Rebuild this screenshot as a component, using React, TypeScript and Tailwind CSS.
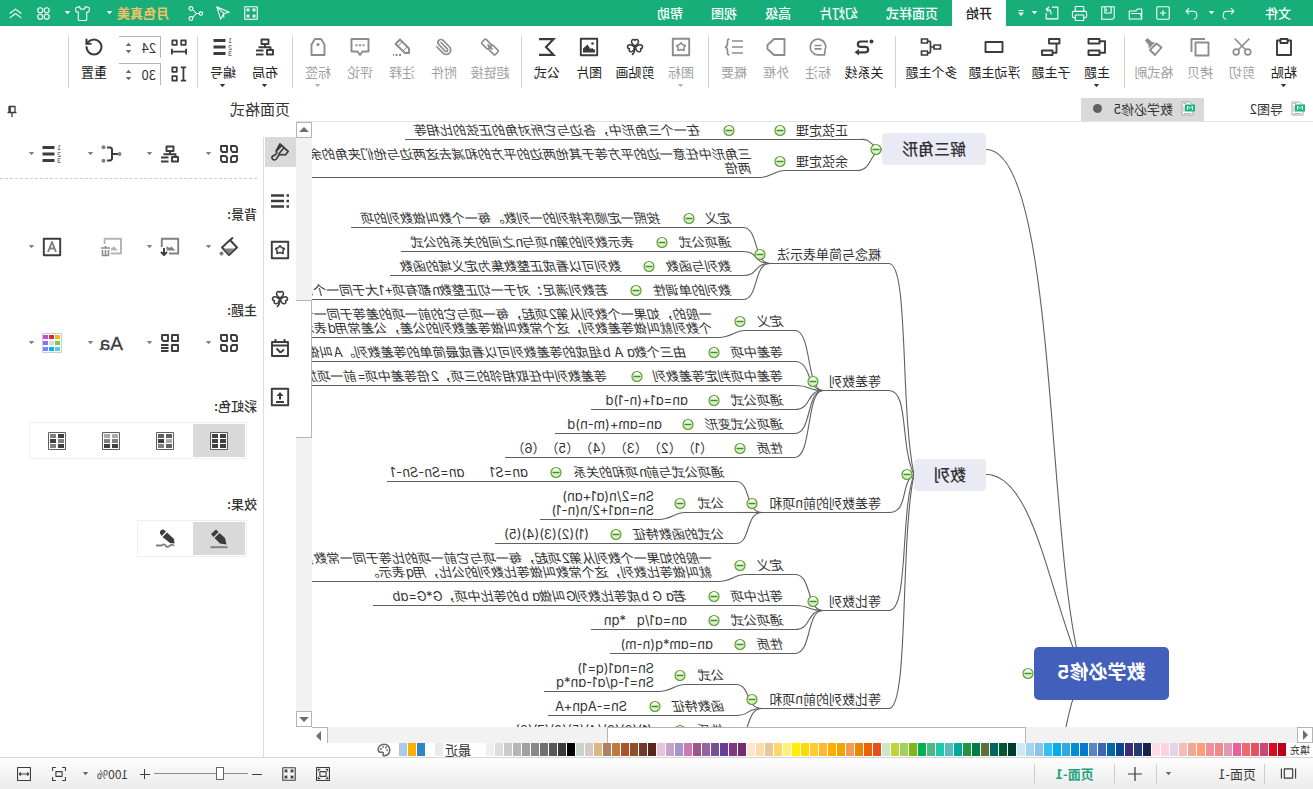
import React, { useState } from 'react';
import { Paperclip, Printer, RotateCw, Shirt, Palette } from 'lucide-react';

interface IcoProps {
  children: React.ReactNode;
  size?: number;
  sw?: number;
  box?: number;
}

const Ico: React.FC<IcoProps> = ({ children, size = 18, sw = 1.9, box = 18 }) => (
  <svg width={size} height={size} viewBox={`0 0 ${box} ${box}`} fill="none" stroke="currentColor" strokeWidth={sw} strokeLinejoin="round" className="shrink-0 overflow-visible">
    {children}
  </svg>
);

const Caret: React.FC<{ className?: string }> = ({ className = '' }) => (
  <svg width="7" height="4" viewBox="0 0 7 4" fill="currentColor" className={`shrink-0 ${className}`}><path d="M0.8 0h5.4L3.5 3.2z" /></svg>
);

const star = 'M9 4.8l1.7 2 2.6.7-1.4 2.3.1 2.7L9 11.6l-3 .9.1-2.7-1.4-2.3 2.6-.7z';

const numberedList = (
  <>
    <path d="M6.5 2.5h12M6.5 9h12M6.5 15.5h12" strokeWidth="3" />
    <g fill="currentColor" stroke="none" fontSize="7" fontFamily="Liberation Sans, sans-serif">
      <text x="0" y="5">1</text>
      <text x="0" y="11.5">2</text>
      <text x="0" y="18">3</text>
    </g>
  </>
);

const orgChart = <path d="M5.5 1.5h7V6h-7zM9 6v3.500M3.500 12V9.300h12M1 12h6v4.500H1zM10.500 12.500H18M10.500 16.500H18" />;

const clover = (
  <g strokeWidth="1.6">
    <path d="M9 8.200C6 6 5.200 4.600 5.600 3.100 6 1.400 8 .900 9 2.400 10 .900 12 1.400 12.400 3.100 12.800 4.600 12 6 9 8.200z" />
    <path d="M8.400 9c-.4 3.400-1.600 4.700-3.200 4.800-1.700.1-2.700-1.500-1.700-2.900C1.700 10.600.900 8.900 2 7.500 3 6.200 5.200 6.300 8.400 9z" />
    <path d="M9.600 9c.4 3.400 1.600 4.700 3.200 4.800 1.700.1 2.700-1.500 1.700-2.900 1.800-.3 2.600-2 1.500-3.400-1-1.300-3.200-1.200-6.400 1.500z" />
    <path d="M9 8.500c-.2 3.500.5 6 3 8.500" />
  </g>
);

const fourLeaf = <path d="M2.500 1H7v4L5.500 7H1V2.500zM11 1h6v4.500L15.500 7H11zM1 11h4.500L7 12.500V17H2.500L1 15.500zM12.500 11H17v4.500L15.500 17H11v-4.500z" />;

const expandArrows = <path d="M1 1h16v16H1zM7 7L4.500 4.500M4 7V4h3M11 7l2.500-2.500M11 4h3v3M7 11l-2.500 2.500M4 11v3h3M11 11l2.500 2.500M14 11v3h-3" />;

const icons: Record<string, React.ReactNode> = {
  paste: <path d="M5.500 2.500h-3.500v14.500h14V2.500h-3.500M5.500 1h7v4h-7z" />,
  cut: <g strokeWidth="1.6"><circle cx="3.2" cy="14" r="2.9" /><circle cx="14.8" cy="14" r="2.9" /><path d="M1.500 0.500l11.500 11.500M16.500 0.500L5 12" /></g>,
  copy: <path d="M0.500 4.500h13v13h-13zM4 1h13.500V14" />,
  brush: <><path d="M6.500 5.500L13 12l-5 5-6.500-7.500z" /><path d="M8 4.500l3-.5L15.500 0 18 2.500 14.500 7l-.5 3.500z" fill="currentColor" stroke="none" /></>,
  topic: <path d="M6.500 1h11v4.500h-11zM6.500 12.500h11V17h-11zM6.500 3.200H1v11.500h5.500" />,
  subTopic: <path d="M0.500 1h10.500v4.500H.5zM7.500 12.500h10.500V17H7.500zM3.500 5.500v9.200h4" />,
  floating: <path d="M0.500 4h17v10H.5z" />,
  multi: <path d="M-0.500 7h6.500v4h-6.500zM12.500 1h6v4h-6zM12.500 13h6v4h-6zM6 9h3M12.500 3C9.500 3 9.500 3 9.500 5.500v7c0 2.500 0 2.500 3 2.500" strokeWidth="1.7" />,
  relation: <><path d="M5 3.500h7.500c3.500 0 3.500 5.300 0 5.300H7.500c-3.500 0-3.500 5.500 0 5.500H14" strokeWidth="2.2" /><circle cx="1.5" cy="3.5" r="2" fill="currentColor" stroke="none" /><path d="M14 11l4.500 3.300L14 17.600z" fill="currentColor" stroke="none" /></>,
  callout: <path d="M2.500 16.800h7A7.800 7.800 0 1 0 2 12.500zM5.500 7.500h7M5.500 10.800h7" strokeWidth="1.7" />,
  boundary: <path d="M0.500 1h10.500l6.500 6v4L11 17H.5z" />,
  summary: <path d="M0 3h11M0 9h11M0 15h11M13.500 1c2 0 2 1 2 3.500S15.500 8.500 17.500 9c-2 .5-2 2-2 4.500s0 3.500-2 3.500" strokeWidth="1.7" />,
  mark: <><path d="M0.800.8h16.400v16.400H.8z" /><path d={star} strokeWidth="1.6" /></>,
  clover,
  image: <><path d="M0.800.8h16.400v16.400H.8z" /><path d="M3 14.500V12l3-2 1.500 1 3-4.500L15 10.500v4z" fill="currentColor" stroke="none" /><circle cx="5.5" cy="5.5" r="1.3" fill="currentColor" stroke="none" /></>,
  sigma: <path d="M17 1.200H2.500L10 9l-7.500 7.800H17" strokeWidth="2.2" strokeLinejoin="miter" />,
  link: <g strokeWidth="1.6"><rect x="8" y="3" width="9" height="6" rx="1" transform="rotate(-45 12.5 6)" /><rect x="1" y="9" width="9" height="6" rx="1" transform="rotate(-45 5.5 12)" /><path d="M6.500 11.500l5-5" strokeWidth="2" /></g>,
  clip: <Paperclip size={18} strokeWidth={2.2} />,
  note: <><path d="M2 10.500L11 1.500 15.500 6 6 15H2z" /><path d="M9 4l4.500 4.500M4 9l4 4" strokeWidth="1" /><path d="M10 17h8" strokeDasharray="2 1.5" /></>,
  comment: <><path d="M0.500 1h17v12.500h-6L9 17l-2.500-3.500h-6z" /><path d="M4.500 7.200h2M8 7.200h2M11.500 7.200h2" /></>,
  tag: <><path d="M2.500 17V6.500L6 1h6l3.500 5.500V17z" /><circle cx="9" cy="6.5" r="1.6" fill="currentColor" stroke="none" /></>,
  layout: orgChart,
  number: numberedList,
  reset: <RotateCw size={20} strokeWidth={2.5} x={-1} y={-1} />
};

interface RibbonItem {
  icon: string;
  label: string;
  off?: boolean;
  menu?: boolean;
}

const ribbonGroups: RibbonItem[][] = [
  [
    { icon: 'paste', label: '粘贴', menu: true },
    { icon: 'cut', label: '剪切', off: true },
    { icon: 'copy', label: '拷贝', off: true },
    { icon: 'brush', label: '格式刷', off: true }
  ],
  [
    { icon: 'topic', label: '主题', menu: true },
    { icon: 'subTopic', label: '子主题' },
    { icon: 'floating', label: '浮动主题' },
    { icon: 'multi', label: '多个主题' }
  ],
  [
    { icon: 'relation', label: '关系线' },
    { icon: 'callout', label: '标注', off: true },
    { icon: 'boundary', label: '外框', off: true },
    { icon: 'summary', label: '概要', off: true }
  ],
  [
    { icon: 'mark', label: '图标', off: true, menu: true },
    { icon: 'clover', label: '剪贴画' },
    { icon: 'image', label: '图片' },
    { icon: 'sigma', label: '公式' }
  ],
  [
    { icon: 'link', label: '超链接', off: true },
    { icon: 'clip', label: '附件', off: true },
    { icon: 'note', label: '注释', off: true },
    { icon: 'comment', label: '评论', off: true },
    { icon: 'tag', label: '标签', off: true, menu: true }
  ],
  [
    { icon: 'layout', label: '布局', menu: true },
    { icon: 'number', label: '编号', menu: true }
  ]
];

const itemWidths: Record<number, string> = { 2: 'w-[42px]', 3: 'w-[50px]', 4: 'w-[63px]' };

const RibbonButton: React.FC<{ item: RibbonItem }> = ({ item }) => (
  <button className={`flex flex-col items-center pt-3 ${itemWidths[item.label.length]} ${item.off ? 'text-[#8c8c8c]' : 'text-[#3c3c3c]'}`}>
    <Ico>{icons[item.icon]}</Ico>
    <span className={`mt-[7px] text-[13px] leading-[18px] whitespace-nowrap ${item.off ? 'text-[#a0a0a0]' : 'text-[#222222]'}`}>{item.label}</span>
    {item.menu && <Caret className={`mt-[3px] ${item.off ? 'text-[#b5b5b5]' : 'text-[#33334d]'}`} />}
  </button>
);

const Divider = () => <div className="mt-2.5 mr-1.5 ml-1 h-[52px] w-px shrink-0 bg-[#d2d2d2]" />;

const Spinner: React.FC<{ label: string; value: string; icon: React.ReactNode }> = ({ label, value, icon }) => {
  const [val, setVal] = useState(value);
  return (
    <div className="flex items-center gap-2.5 text-[#3c3c3c]">
      <Ico size={16} sw={2}>{icon}</Ico>
      <div className="flex h-[22px] w-[42px] items-center border-t border-l border-[#b4b4b4]">
        <input aria-label={label} value={val} onChange={e => setVal(e.target.value)} className="w-7 bg-transparent pl-1 text-[13px] leading-4 text-[#33333d] outline-none" />
        <div className="flex flex-col gap-1 text-[#666666]">
          <button aria-label={`${label} +`} onClick={() => setVal(String(Number(val) + 1))}><Caret className="rotate-180" /></button>
          <button aria-label={`${label} -`} onClick={() => setVal(String(Number(val) - 1))}><Caret /></button>
        </div>
      </div>
    </div>
  );
};

interface TopicRow {
  y: number;
  text: string;
  cx: number; // collapse button
  x: number; // leaf text
  leaf: string[];
  end: number;
  plain?: boolean;
}

interface Branch {
  y: number;
  text: string;
  joint: number;
  start: number;
  rows: TopicRow[];
}

const branches: Branch[] = [
  {
    y: 132, text: '概念与简单表示法', joint: 546, start: 570,
    rows: [
      { y: 96, text: '定义', cx: 624, x: 652, leaf: ['按照一定顺序排列的一列数。每一个数叫做数列的项'], end: 962 },
      { y: 120, text: '通项公式', cx: 651, x: 678, leaf: ['表示数列的第n项与n之间的关系的公式'], end: 912 },
      { y: 144, text: '数列与函数', cx: 664, x: 691, leaf: ['数列可以看成正整数集为定义域的函数'], end: 923 },
      { y: 168, text: '数列的单调性', cx: 677, x: 704, leaf: ['若数列满足：对于一切正整数n都有项+1大于同一个常'], end: 1100 }
    ]
  },
  {
    y: 259, text: '等差数列', joint: 493, start: 518,
    rows: [
      { y: 199, text: '定义', cx: 573, x: 600, leaf: ['一般的，如果一个数列从第2项起，每一项与它的前一项的差等于同一个', '个数列就叫做等差数列，这个常数叫做等差数列的公差，公差常用d表示'], end: 1100 },
      { y: 230, text: '等差中项', cx: 599, x: 626, leaf: ['由三个数a A b组成的等差数列可以看成最简单的等差数列。A叫做'], end: 1100 },
      { y: 254, text: '等差中项判定等差数列', cx: 676, x: 705, leaf: ['等差数列中任取相邻的三项，2倍等差中项=前一项加'], end: 1100 },
      { y: 278, text: '通项公式', cx: 599, x: 625, leaf: ['an=a1+(n-1)d'], end: 722, plain: true },
      { y: 302, text: '通项公式变形', cx: 625, x: 651, leaf: ['an=am+(m-n)d'], end: 758, plain: true },
      { y: 326, text: '性质', cx: 573, x: 600, leaf: ['（1）（2）（3）（4）（5）（6）'], end: 808, plain: true }
    ]
  },
  {
    y: 381, text: '等差数列的前n项和', joint: 554, start: 577,
    rows: [
      { y: 350, text: '通项公式与前n项和的关系', cx: 757, x: 785, leaf: ['an=S1       an=Sn-Sn-1'], end: 926 },
      { y: 381, text: '公式', cx: 633, x: 659, leaf: ['Sn=2/n(a1+an)', 'Sn=na1+2\\n(n-1)'], end: 773, plain: true },
      { y: 412, text: '公式的函数特征', cx: 697, x: 724, leaf: ['(1)(2)(3)(4)(5)'], end: 818, plain: true }
    ]
  },
  {
    y: 479, text: '等比数列', joint: 493, start: 518,
    rows: [
      { y: 443, text: '定义', cx: 573, x: 600, leaf: ['一般的如果一个数列从第2项起，每一项与它前一项的比等于同一常数，', '就叫做等比数列，这个常数叫做等比数列的公比，用q表示。'], end: 1100 },
      { y: 474, text: '等比中项', cx: 599, x: 626, leaf: ['若a G b成等比数列G叫做a b的等比中项，G*G=ab'], end: 940 },
      { y: 498, text: '通项公式', cx: 599, x: 626, leaf: ['an=a1/q   *qn'], end: 722, plain: true },
      { y: 522, text: '性质', cx: 573, x: 600, leaf: ['an=am*q(n-m)'], end: 703, plain: true }
    ]
  },
  {
    y: 577, text: '等比数列的前n项和', joint: 554, start: 577,
    rows: [
      { y: 553, text: '公式', cx: 633, x: 659, leaf: ['Sn=na1(q=1)', 'Sn=1-q/a1-an*q'], end: 769, plain: true },
      { y: 584, text: '函数特征', cx: 658, x: 686, leaf: ['Sn=-Aqn+A'], end: 765, plain: true },
      { y: 608, text: '性质', cx: 633, x: 661, leaf: ['(1)(2)(3)(4)(5)(6)(7)(8)'], end: 810, plain: true }
    ]
  }
];

// topics above the first main branch hang on their own node
const sineRows: TopicRow[] = [
  { y: 8, text: '正弦定理', cx: 533, x: 612, leaf: ['在一个三角形中，各边与它所对角的正弦的比相等'], end: 908 },
  { y: 39, text: '余弦定理', cx: 533, x: 561, leaf: ['三角形中任意一边的平方等于其他两边的平方的和减去这两边与他们夹角的余', '两倍'], end: 1100 }
];

const rowLine = (row: TopicRow, from: number) => {
  const y = row.y + 9.5;
  if (row.leaf.length === 1) return `M${from} ${y}H${row.end}`;
  return `M${from} ${y}H${row.cx - 5}c10 0 14 7 26 7H${row.end}`;
};

const Label: React.FC<{ x: number; y: number; children: React.ReactNode; slant?: boolean }> = ({ x, y, children, slant }) => (
  <div className={`absolute text-[13px] leading-[14px] whitespace-pre text-[#333333] ${slant ? 'italic' : ''}`} style={{ left: x, top: y }}>
    {children}
  </div>
);

const Row: React.FC<{ row: TopicRow; x: number; slant?: boolean }> = ({ row, x, slant }) => (
  <>
    <Label x={x} y={row.y - 7} slant={slant}>{row.text}</Label>
    <Label x={row.x} y={row.y - 7 * row.leaf.length} slant={!row.plain}>{row.leaf.join('\n')}</Label>
  </>
);

const Toggle: React.FC<{ x: number; y: number }> = ({ x, y }) => (
  <g>
    <circle cx={x} cy={y + 0.5} r="5" fill="url(#knob)" stroke="#5aa02c" strokeWidth="1.2" />
    <path d={`M${x - 3.5} ${y + 0.5}h7`} stroke="#3c9a0a" strokeWidth="1.5" />
  </g>
);

const MindMap = () => (
  <div className="relative min-w-0 flex-1 overflow-hidden bg-white font-[Inter,'Noto_Sans_CJK_SC',sans-serif] [font-feature-settings:'cv11'] [text-spacing-trim:space-all]">
    <svg className="absolute inset-0 h-full w-full" fill="none" stroke="#606060" strokeWidth="1.1">
      <defs>
        <linearGradient id="knob" x1="0" y1="0" x2="0" y2="1">
          <stop offset="0" stopColor="#ffffff" />
          <stop offset="1" stopColor="#cfe6c4" />
        </linearGradient>
      </defs>
      <path d="M327 27.5C255 27.5 267 438 230 551M327 352.5C278 352.5 263 478 230 551M230 551C240 572 244 590 248 610" />
      <path d="M431 27.5C444 24 441 16.5 453 17.500M431 27.500C444 31 441 48 455 48.500" />
      {sineRows.map(row => <path key={row.y} d={rowLine(row, 453)} />)}
      {branches.map(b => (
        <g key={b.y}>
          <path d={`M399 352.5C413 ${352 + (b.y - 352) * 0.3} 404 ${b.y + 9.5} 424 ${b.y + 9.5}H${b.joint}`} />
          {b.rows.map(row => (
            <g key={row.y}>
              <path d={`M${b.joint - 3} ${b.y + 9.5}C${b.joint + 14} ${b.y + 9.5} ${b.joint + 8} ${row.y + 9.5} ${b.start} ${row.y + 9.5}`} />
              <path d={rowLine(row, b.start)} />
            </g>
          ))}
        </g>
      ))}
      <Toggle x={437} y={27} />
      <Toggle x={533} y={8} />
      <Toggle x={584} y={8} />
      <Toggle x={533} y={39} />
      <Toggle x={406} y={352} />
      <Toggle x={285} y={551} />
      {branches.map(b => (
        <g key={b.y}>
          <Toggle x={b.joint + 7} y={b.y} />
          {b.rows.map(row => <Toggle key={row.y} x={row.cx} y={row.y} />)}
        </g>
      ))}
    </svg>
    {sineRows.map(row => <Row key={row.y} row={row} x={465} />)}
    {branches.map(b => (
      <React.Fragment key={b.y}>
        <Label x={432} y={b.y - 7}>{b.text}</Label>
        {b.rows.map(row => <Row key={row.y} row={row} x={b.start + 11} slant />)}
      </React.Fragment>
    ))}
    <div className="absolute top-[11px] left-[327px] flex h-8 w-[104px] items-center justify-center rounded-[4px] bg-[#eaeaf4] text-base font-medium text-[#333333]">解三角形</div>
    <div className="absolute top-[337px] left-[327px] flex h-8 w-[72px] items-center justify-center rounded-[4px] bg-[#eaeaf4] text-base font-medium text-[#333333]">数列</div>
    <div className="absolute top-[525px] left-[144px] flex h-[53px] w-[135px] items-center justify-center rounded-[5px] bg-[#425fbb] text-[19px] font-bold text-white">数学必修5</div>
  </div>
);

const fills = (
  '#b8001b #d90a22 #c74a74 #e8505f #ec6a6f #ea5f9b #e099b5 #ec8a87 #f08f9b #ff9d77 #f0a896 #f6bcb9 #e7d3e8 #ffd2e3 #fddde2 ' +
  '#14234d #233a70 #412a75 #0a468f #0068a2 #4065b0 #5586c5 #007bce #008fd0 #30a9df #00aeef #2fc2f3 #8cc4ea #9fd6ee #cce9f4 ' +
  '#003c2e #005a2e #00665f #5a7235 #007b45 #22963f #00a99d #57bcbc #1cc9ad #4dba82 #00b050 #7eb814 #a3cf62 #bfd63a #cbe6c8 ' +
  '#e4501e #ec6400 #ee8400 #f39a57 #f2a500 #ffad00 #ffb92e #ffcb2f #ffdb00 #fff000 #fff17f #ffd66d #e8c896 #fddcab #fde6cf ' +
  '#742d70 #803a84 #683f98 #75519a #94649d #a05588 #cc7aae #a792cf #c7a3cc #eac0db ' +
  '#57271a #733a2e #905128 #a9542b #bf7a40 #ad8264 #ddb784 #d4cac7 #c8d3ca ' +
  '#000000 #3e3a39 #595757 #727171 #888888 #9fa0a0 #b5b5b6 #c9caca #dcdddd #efefef'
).split(' ');

const Swatch: React.FC<{ color: string }> = ({ color }) => (
  <button aria-label={color} className="h-[13px] w-2 shrink-0" style={{ backgroundColor: color }} />
);

const Arrow: React.FC<{ d: string; label: string; className: string }> = ({ d, label, className }) => (
  <button aria-label={label} className={`flex size-4 shrink-0 items-center justify-center border-[#b4b4b4] bg-white text-[#6e6e6e] ${className}`}>
    <svg width="10" height="10" viewBox="0 0 10 10" fill="currentColor"><path d={d} /></svg>
  </button>
);

const DocIcon = () => (
  <svg width="14" height="15" viewBox="0 0 14 15" fill="none" className="shrink-0">
    <path d="M5.500 1H13v13H2V4z" fill="#ffffff" stroke="#a8a8a8" />
    <path d="M4 12.500h7M8.500 2.500h3M11 5v6" stroke="#b5b5b5" />
    <path d="M0 3.500h10v7H0z" fill="#12b981" />
    <path d="M2.500 9V5l2.500 2.500L7.500 5v4" stroke="#ffffff" />
  </svg>
);

const stripIcons: { label: string; icon: React.ReactNode }[] = [
  { label: '格式', icon: <path d="M9 1L0.800 8.500l3 3.500 3-.5 3 .5c2 1.500 2.500 5 4.500 5s3.500-2 2.500-3.500-4.500-1-4.500-3.500l.5-2zM5 4.800l5.500 6.500M9 1v3.500l3.500 3.500" strokeWidth="1.7" /> },
  { label: '大纲', icon: <path d="M5 3.500h13M5 9h13M5 14.500h13M0 3.500h2.500M0 9h2.500M0 14.500h2.500" strokeWidth="2.6" /> },
  { label: '图标', icon: icons.mark },
  { label: '剪贴画', icon: clover },
  { label: '任务', icon: <path d="M1 3h16v14H1zM1 6.500h16M4.500 0V3M13.500 0V3M12.500 9.500l-4 4M5 10.500l3.500 3" /> },
  { label: '上传', icon: <><path d="M0.800.8h16.400v16.400H.8z" /><path d="M9 11.500V6M5 14h8" strokeWidth="2" /><path d="M5.500 8L9 4l3.500 4z" fill="currentColor" stroke="none" /></> }
];

const toolRows: Record<string, { label: string; icon: React.ReactNode; off?: boolean }[]> = {
  布局: [
    { label: '模板', icon: fourLeaf },
    { label: '布局', icon: orgChart },
    { label: '连线', icon: <><path d="M1.500 9H8M13 2.500H9.500L8 4v10l1.500 1.500H13" strokeWidth="2" /><g fill="#808080" stroke="none"><circle cx="0.5" cy="9" r="2" /><circle cx="16.5" cy="2.2" r="2" /><circle cx="16.5" cy="15.8" r="2" /></g></> },
    { label: '编号', icon: numberedList }
  ],
  背景: [
    { label: '背景颜色', icon: <><path d="M5-0.500L9 3M1 9.500L8 2l8 7.500L9 17z" /><path d="M3.500 10.500h11L9 16z" fill="#808080" stroke="none" /><circle cx="16.5" cy="15.5" r="2" fill="#808080" stroke="none" /></> },
    { label: '背景图片', icon: <><path d="M10 15.500H.8V.8h16.400V9" stroke="#808080" /><path d="M3.500 12.500l4-4 2 1.500 3-2v4.500z" fill="#808080" stroke="none" /><path d="M15 10v7M12 14l3 3 3-3" /></> },
    { label: '删除背景', off: true, icon: <><path d="M9 15.500H-1V.8h16.400V6" /><path d="M2 12.500l4-4 3 2v2z" fill="currentColor" stroke="none" /><path d="M10 10h9M11.500 12v5.500h6V12M14.500 8v2M14.500 12v5" stroke="#8c8c8c" strokeWidth="1.6" /></> },
    { label: '水印', icon: <><path d="M0.800.8h16.400v16.400H.8z" /><path d="M5 14l4-10 4 10M6.500 10.500h5" stroke="#808080" /></> }
  ],
  主题: [
    { label: '主题', icon: fourLeaf },
    { label: '主题颜色', icon: <path d="M1 1h6v6H1zM11 1h6v4.500L15.500 7H11zM1 11h6v6H1zM10.500 11H18M10.500 14H18M10.500 17H18" /> },
    { label: '主题字体', icon: <text x="-3" y="16" fontSize="19" fill="currentColor" strokeWidth="0.3" fontFamily="Liberation Sans, sans-serif">Aa</text> },
    {
      label: '配色',
      icon: (
        <g stroke="none">
          <path d="M-1-1h20v20H-1z" fill="#c9cdd8" />
          <path d="M0 0h18v18H0z" fill="#ffffff" />
          {['#f0c000', '#dc2850', '#c050d0', '#78cc40', '#dcdcdc', '#9070f0', '#64c8dc', '#00b4ff', '#7a82ff'].map((c, i) => (
            <rect key={c} x={1 + (i % 3) * 6} y={1 + Math.floor(i / 3) * 6} width="5" height="4" fill={c} />
          ))}
        </g>
      )
    }
  ]
};

const ToolRow: React.FC<{ name: string }> = ({ name }) => (
  <div className="flex h-[34px] items-center pl-[25px]">
    {toolRows[name].map(t => (
      <button key={t.label} aria-label={t.label} className={`flex w-[59px] items-center gap-2 ${t.off ? 'text-[#b4b4b4]' : 'text-[#3c3c3c]'}`}>
        <Ico>{t.icon}</Ico>
        {!t.off && <Caret className="text-[#808080]" />}
      </button>
    ))}
  </div>
);

const Heading: React.FC<{ children: React.ReactNode; className: string }> = ({ children, className }) => (
  <h3 className={`pl-1.5 text-[13px] leading-5 font-medium text-[#333333] ${className}`}>{children}</h3>
);

const rainbows = [
  ['#404040', '#404040', '#404040', '#404040', '#404040', '#404040'],
  ['#606060', '#606060', '#aaaaaa', '#404040', '#606060', '#808080'],
  ['#aaaaaa', '#aaaaaa', '#808080', '#808080', '#404040', '#404040'],
  ['#404040', '#808080', '#808080', '#404040', '#404040', '#808080']
];

const HeaderButton: React.FC<{ label: string; className?: string; children: React.ReactNode }> = ({ label, className = '', children }) => (
  <button aria-label={label} className={`flex items-center justify-center ${className}`}>{children}</button>
);

const menuTabs = ['页面样式', '幻灯片', '高级', '视图', '帮助'];

const App: React.FC = () => {
  const [rainbow, setRainbow] = useState(0);
  const [effect, setEffect] = useState(0);
  const [zoom, setZoom] = useState(28);

  return (
    <div className="flex h-screen -scale-x-100 flex-col overflow-hidden bg-white font-['Noto_Sans_CJK_SC',sans-serif] text-[13px] text-[#333333]">
      {/* Title bar */}
      <header className="flex h-[26px] shrink-0 items-center bg-[#17ae79] font-medium text-white">
        <button className="w-[70px]">文件</button>
        <HeaderButton label="撤销" className="w-7"><Ico size={13} sw={1.4}><path d="M5.500 1.500L1.500 6l4 4M1.500 6H11c7 0 7 11 1 11" /></Ico></HeaderButton>
        <Caret />
        <HeaderButton label="重做" className="w-8"><Ico size={13} sw={1.4}><path d="M12.500 1.500l4 4.500-4 4M16.500 6H7c-7 0-7 11-1 11" /></Ico></HeaderButton>
        <HeaderButton label="新建" className="w-[26px]"><Ico size={14} sw={1.4}><rect x="1" y="1" width="16" height="16" rx="1.5" /><path d="M9 5v8M5 9h8" /></Ico></HeaderButton>
        <HeaderButton label="打开" className="w-7"><Ico size={15} sw={1.3}><path d="M1.500 15.500v-12h5l2 2.500h8v9.500zM1.500 15.500l1.500-6.500h11" /></Ico></HeaderButton>
        <HeaderButton label="保存" className="w-7"><Ico size={14} sw={1.4}><path d="M1 1h16v16H3L1 15zM5 1v8h8V1M11 3.500v3" /></Ico></HeaderButton>
        <HeaderButton label="打印" className="w-7"><Printer size={17} strokeWidth={1.5} /></HeaderButton>
        <HeaderButton label="导出" className="w-7"><Ico size={14} sw={1.4}><path d="M9 1.500H1.500v15h15V9M10 11c0-4 1-7 6-7M12.500 1l4 3-3 3.500" /></Ico></HeaderButton>
        <Caret />
        <HeaderButton label="更多" className="ml-1 w-3">
          <Ico size={8} box={8} sw={1}><path d="M1.500 1.500h5" /><path d="M1 3.500h6L4 7z" fill="currentColor" stroke="none" /></Ico>
        </HeaderButton>
        <button className="ml-[9px] h-full w-[54px] bg-white text-[#222222]">开始</button>
        <nav className="ml-3.5 flex">
          {menuTabs.map(t => <button key={t} className="mr-7 leading-[18px]">{t}</button>)}
        </nav>
        <div className="ml-auto flex items-center">
          <HeaderButton label="全屏" className="w-7"><Ico size={14} sw={1.4}>{expandArrows}</Ico></HeaderButton>
          <HeaderButton label="发送" className="w-7"><Ico size={14} sw={1.3}><path d="M17 1L1 8l7 1.500L12 17zM17 1L8 9.500V15" /></Ico></HeaderButton>
          <HeaderButton label="分享" className="w-7"><Ico size={15} sw={1.3}><circle cx="2.5" cy="9" r="2" /><circle cx="14.5" cy="3" r="2.3" /><circle cx="14.5" cy="15" r="2.3" /><path d="M4.500 9h3.500l4.500-4.800M8 9l4.500 4.800" /></Ico></HeaderButton>
          <button className="ml-3 flex items-center gap-1 font-bold text-[#f5c165]">月色真美<Caret className="text-white" /></button>
          <HeaderButton label="皮肤" className="ml-[11px] w-6"><Shirt size={17} strokeWidth={1.5} /></HeaderButton>
          <Caret />
          <HeaderButton label="应用" className="ml-1.5 w-7"><Ico size={13} sw={1.6}><circle cx="4.5" cy="4.5" r="3.5" /><circle cx="13.5" cy="4.5" r="3.5" /><circle cx="4.5" cy="13.5" r="3.5" /><circle cx="13.5" cy="13.5" r="3.5" /></Ico></HeaderButton>
          <HeaderButton label="收起" className="mr-0.5 w-7"><Ico size={13} sw={1.5}><path d="M1 9l8-6 8 6M1 15l8-6 8 6" /></Ico></HeaderButton>
        </div>
      </header>

      {/* Ribbon */}
      <div className="flex h-[72px] shrink-0 items-start pl-2">
        {ribbonGroups.map((group, i) => (
          <React.Fragment key={i}>
            {group.map(item => <RibbonButton key={item.label} item={item} />)}
            <Divider />
          </React.Fragment>
        ))}
        <div className="mr-1 ml-1 flex flex-col gap-[5px] pt-2.5">
          <Spinner label="水平间距" value="24" icon={<path d="M1.500 1.500h5v5h-5zM11.500 1.500h5v5h-5zM1 11v6.500M17 11v6.500M1 14.200h16" />} />
          <Spinner label="垂直间距" value="30" icon={<path d="M11.500 1.500h5v5h-5zM11.500 11.500h5v5h-5zM1 1.500h6M1 16.500h6M4 1.500v15" />} />
        </div>
        <RibbonButton item={{ icon: 'reset', label: '重置' }} />
        <Divider />
      </div>

      <div className="flex min-h-0 flex-1">
        <main className="flex min-w-0 flex-1 flex-col">
          {/* Document tabs */}
          <div className="flex h-6 shrink-0 border-b border-[#e2e2e2]">
            <button className="flex w-[109px] items-center gap-2 pb-0.5 pl-2"><DocIcon />导图2</button>
            <button className="flex w-[123px] items-center gap-2 bg-[#d9d9d9] pb-0.5 pl-[9px]">
              <DocIcon />
              <span>数学必修5</span>
              <span className="ml-1 size-[9px] rounded-full bg-[#606060]" />
            </button>
          </div>

          <div className="flex min-h-0 flex-1">
            <MindMap />
            <div className="flex w-4 shrink-0 flex-col bg-[#f2f2f2]">
              <Arrow label="上" d="M0 7l5-5 5 5z" className="border" />
              <div className="grow-[163]" />
              <div className="grow-[136] border border-r-0 border-[#b4b4b4] bg-white" />
              <div className="grow-[274]" />
              <Arrow label="下" d="M0 3h10L5 8z" className="border" />
            </div>
          </div>
          <div className="flex h-4 shrink-0 pr-4">
            <Arrow label="左" d="M7 0v10L2 5z" className="border" />
            <div className="flex flex-1 bg-[#f2f2f2]">
              <div className="grow-[272]" />
              <div className="grow-[417] border border-b-0 border-[#b4b4b4] bg-white" />
              <div className="grow-[280]" />
            </div>
            <Arrow label="右" d="M3 0v10l5-5z" className="border-t border-l" />
          </div>

          {/* Fill colours */}
          <div className="flex h-[14px] shrink-0 items-start gap-px overflow-hidden">
            <span className="w-[26px] shrink-0 text-center text-[10px] leading-[14px]">填充</span>
            {fills.map(c => <Swatch key={c} color={c} />)}
            <span className="mr-px ml-3.5 shrink-0 text-[13px] leading-[13px]">最近</span>
            <Swatch color="#ebebeb" />
            <span className="w-2" />
            <Swatch color="#2e86c4" />
            <Swatch color="#ffae00" />
            <Swatch color="#abc9ea" />
            <button aria-label="调色板" className="ml-[7px] text-[#666666]"><Palette size={14} strokeWidth={2.5} /></button>
          </div>
        </main>

        {/* Format panel */}
        <aside className="flex w-[296px] shrink-0 flex-col">
          <div className="flex h-[39px] shrink-0 items-start justify-between px-1.5">
            <h2 className="text-[15px] leading-[22px]">页面格式</h2>
            <button aria-label="固定" className="mt-[7px] text-[#3c3c3c]"><Ico size={12} box={12} sw={1.3}><path d="M1.500 7.500h9M3 7.500v-6h6v6M7.800 1.500v6M6 7.500V12" /></Ico></button>
          </div>
          <div className="flex min-h-0 flex-1">
            <div className="flex w-[33px] shrink-0 flex-col gap-[19px] border-r border-[#dcdcdc]">
              {stripIcons.map((s, i) => (
                <button key={s.label} aria-label={s.label} className={`mr-px flex h-[30px] items-center justify-center text-[#3c3c3c] ${i === 0 ? 'bg-[#d9d9d9]' : ''}`}>
                  <Ico>{s.icon}</Ico>
                </button>
              ))}
            </div>
            <div className="min-w-0 flex-1">
              <ToolRow name="布局" />
              <div className="mt-[7px] ml-1.5 border-t border-dashed border-[#cccccc]" />
              <Heading className="mt-[25px] mb-1.5">背景:</Heading>
              <ToolRow name="背景" />
              <Heading className="mt-9 mb-1.5">主题:</Heading>
              <ToolRow name="主题" />
              <Heading className="mt-9 mb-1.5">彩虹色:</Heading>
              <div className="ml-4 flex h-[37px] w-fit gap-0.5 border border-[#f0f0f0] p-px">
                {rainbows.map((cells, i) => (
                  <button key={i} aria-label={`彩虹色 ${i + 1}`} onClick={() => setRainbow(i)} className={`flex w-[52px] items-center justify-center text-[#606060] ${rainbow === i ? 'bg-[#d9d9d9]' : ''}`}>
                    <Ico sw={1}>
                      <path d="M.5.5h17v17H.5z" fill="#ffffff" />
                      {cells.map((c, j) => <rect key={j} x={2 + (j % 2) * 8} y={2 + Math.floor(j / 2) * 5} width="6" height="4" fill={c} stroke="none" />)}
                    </Ico>
                  </button>
                ))}
              </div>
              <Heading className="mt-[35px] mb-1.5">效果:</Heading>
              <div className="ml-4 flex h-[37px] w-fit gap-0.5 border border-[#f0f0f0] p-px">
                <button aria-label="直线" onClick={() => setEffect(0)} className={`flex w-[52px] items-center justify-center text-[#3c3c3c] ${effect === 0 ? 'bg-[#d9d9d9]' : ''}`}>
                  <Ico><path d="M1.500 14.500L3 8l5.500-5 5 5-5.500 5.500zM9.500 2l2.500-2.500 5 4.500L14.500 7z" fill="currentColor" stroke="none" /><path d="M0.500 17.200h17" stroke="#808080" /></Ico>
                </button>
                <button aria-label="手绘" onClick={() => setEffect(1)} className={`flex w-[52px] items-center justify-center text-[#3c3c3c] ${effect === 1 ? 'bg-[#d9d9d9]' : ''}`}>
                  <Ico><path d="M-0.500 13.500L0 9l7-6.500 4.500 4.500-7.500 6zM8 1.500L10.500-.5q4 0 3.500 4L12.300 6z" fill="currentColor" stroke="none" /><path d="M0 16c2-2.500 3-1 4.500 0s3 1.500 4-.5 2.500-1 4 0H18" stroke="#808080" /></Ico>
                </button>
              </div>
            </div>
          </div>
        </aside>
      </div>

      {/* Status bar */}
      <footer className="flex h-8 shrink-0 items-center border-t border-[#d8d8d8] bg-linear-to-b from-[#fdfdfd] to-[#ebebeb] text-[#3c3c3c]">
        <button aria-label="页面列表" className="flex w-12 justify-center"><Ico size={15} sw={1.4}><path d="M0.500 3v12M17.500 3v12M4 3.500h10v11H4z" /></Ico></button>
        <div className="h-5 w-px bg-[#cccccc]" />
        <button className="flex w-[107px] items-center justify-between px-2 leading-5">页面-1<Caret className="text-[#666666]" /></button>
        <div className="h-5 w-px bg-[#cccccc]" />
        <button aria-label="新增页面" className="flex w-[41px] justify-center"><Ico size={14} sw={1.6}><path d="M9 0v18M0 9h18" /></Ico></button>
        <div className="h-5 w-px bg-[#cccccc]" />
        <button className="w-[79px] font-bold text-[#1fa37a]">页面-1</button>
        <div className="h-5 w-px bg-[#cccccc]" />
        <div className="ml-auto flex items-center">
          <button aria-label="适合窗口" className="mr-5"><Ico size={14} sw={1.4}><path d="M.7.7h16.600v16.600H.7zM5 6h8v6H5zM3 5.500V3h2.500M15 5.500V3h-2.500M3 12.500V15h2.500M15 12.500V15h-2.500" /></Ico></button>
          <button aria-label="全屏显示" className="mr-5"><Ico size={14} sw={1.4}>{expandArrows}</Ico></button>
          <button aria-label="缩小"><Ico size={10} box={10} sw={1}><path d="M0 5.500h10" /></Ico></button>
          <input
            type="range"
            aria-label="缩放"
            value={zoom}
            onChange={e => setZoom(Number(e.target.value))}
            className="mx-1 h-4 w-[94px] appearance-none bg-transparent [&::-webkit-slider-runnable-track]:h-px [&::-webkit-slider-runnable-track]:bg-[#8c8c8c] [&::-webkit-slider-thumb]:-mt-1.5 [&::-webkit-slider-thumb]:h-[13px] [&::-webkit-slider-thumb]:w-2 [&::-webkit-slider-thumb]:appearance-none [&::-webkit-slider-thumb]:border [&::-webkit-slider-thumb]:border-[#666666] [&::-webkit-slider-thumb]:bg-white"
          />
          <button aria-label="放大"><Ico size={10} box={10} sw={1}><path d="M0 5.500h10M5.500 0v10" /></Ico></button>
          <button className="ml-3 flex items-center gap-2 text-xs">100%<Caret className="text-[#666666]" /></button>
          <button aria-label="适合页面" className="ml-4"><Ico size={14} sw={1.4}><path d="M5 .7H.7V5M13 .7h4.300V5M5 17.300H.7V13M13 17.300h4.300V13M5 6h8v6H5z" /></Ico></button>
          <button aria-label="适合宽度" className="mr-[17px] ml-[21px]"><Ico size={14} sw={1.4}><path d="M.7.7h16.600v16.600H.7zM3 9h12M5 7L3 9l2 2M13 7l2 2-2 2" /></Ico></button>
        </div>
      </footer>
    </div>
  );
};

export default App;
